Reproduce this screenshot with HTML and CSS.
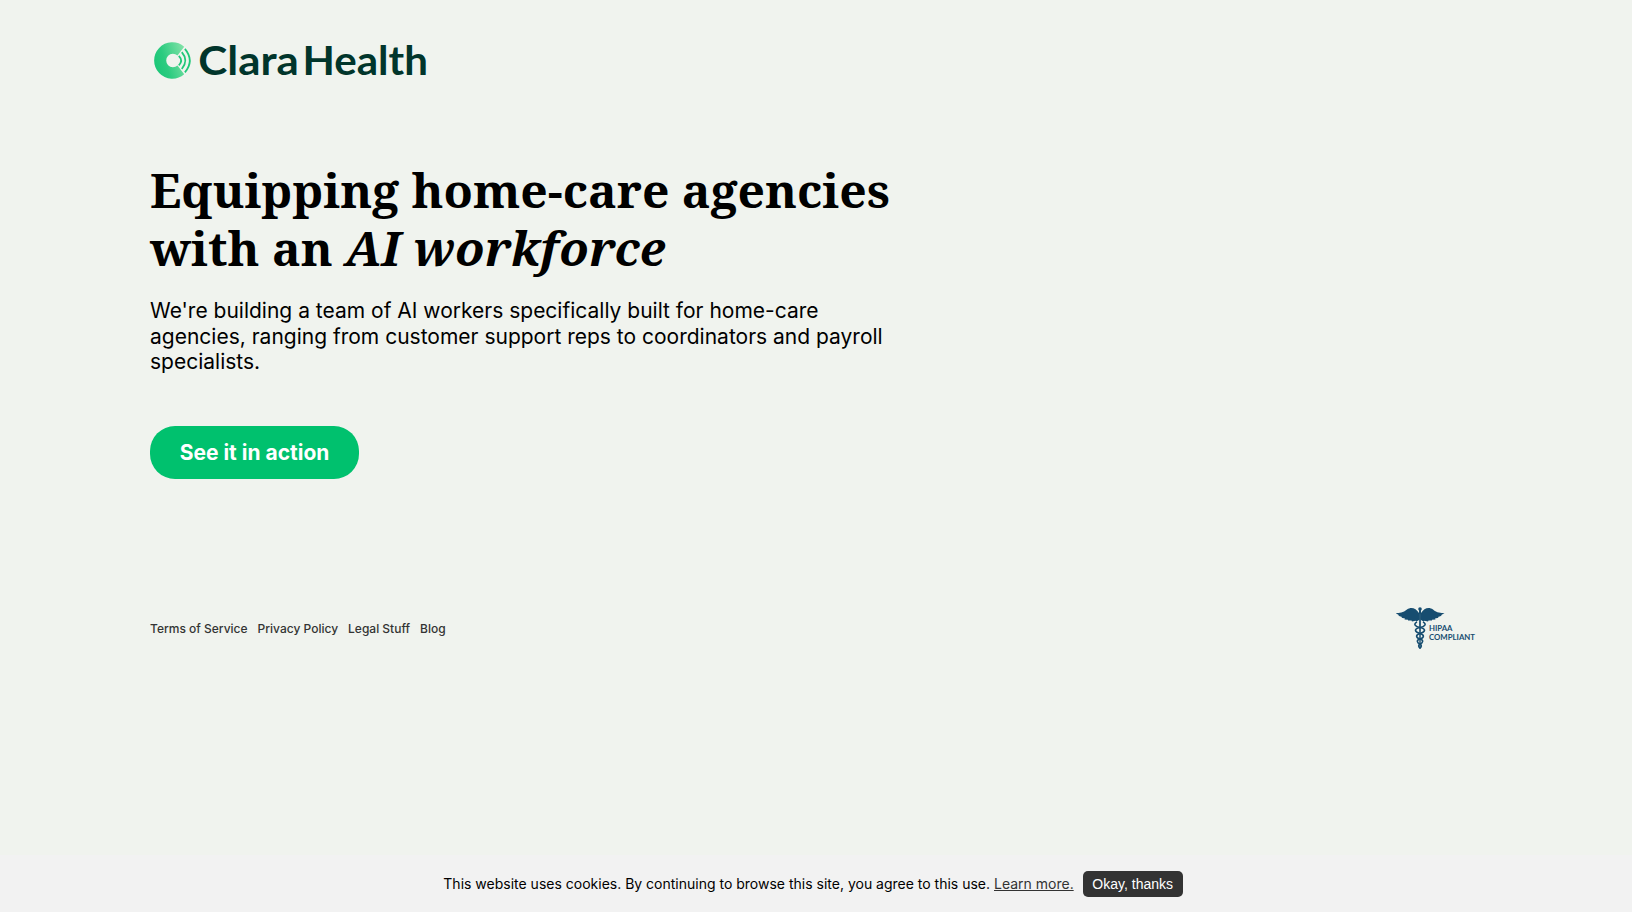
FILE: index.html
```
<!DOCTYPE html>
<html lang="en">
<head>
<meta charset="utf-8">
<title>Clara Health</title>
<link rel="stylesheet" href="styles.css">
</head>
<body>
<div class="page">
  <header class="header">
    <svg class="logo" viewBox="0 -10 280 62" role="img" aria-label="Clara Health">
      <defs>
        <linearGradient id="mark" x1="1" y1=".1" x2="0" y2=".5">
          <stop offset="0" stop-color="#83e3a9"/>
          <stop offset=".7" stop-color="#2bcb7f"/>
          <stop offset="1" stop-color="#1dc778"/>
        </linearGradient>
      </defs>
      <path fill="url(#mark)" d="M34.200 6.700A18.200 18.200 0 1 0 34.200 34.300L27.500 25.400A6.700 6.700 0 1 1 27.500 15.600Z"/>
      <g fill="none" stroke="#20c879" stroke-width="1.8">
        <path d="M28.800 15.800Q33.400 20.500 28.800 25.400"/>
        <path d="M31.800 12.200Q38.900 20.500 31.800 29"/>
        <path d="M34.900 8.800Q44.700 20.500 34.900 32.300"/>
      </g>
      <g class="wordmark">
        <text x="48.300" y="34.500" textLength="100.500" lengthAdjust="spacingAndGlyphs">Clara</text>
        <text x="152.500" y="34.500" textLength="125.500" lengthAdjust="spacingAndGlyphs">Health</text>
      </g>
    </svg>
  </header>
  <main class="hero">
    <h1 class="title">Equipping home-care agencies<br>with an <em>AI workforce</em></h1>
    <p class="lead">We're building a team of AI workers specifically built for home-care<br>agencies, ranging from customer support reps to coordinators and payroll<br>specialists.</p>
    <a class="cta">See it in action</a>
  </main>
  <footer class="footer">
    <nav class="links"><a>Terms of Service</a><a>Privacy Policy</a><a>Legal Stuff</a><a>Blog</a></nav>
    <svg class="hipaa" viewBox="0 0 82 46" role="img" aria-label="HIPAA compliant">
      <g fill="#174d70">
        <path d="M23 7C20 2 15 .500 11 3.500 7 7 3 7 -.500 7L3 9.200 2.300 9.800 6 11 5.500 11.700 9 12.600 8.500 13.400 12 13.800 12 14.600 15.500 14.500 16 15.400 19.500 14.800 20.500 15.600 23 14Z"/>
        <path d="M25 7C28 2 33 .500 37 3.500 41 7 45 7 48.500 7L45 9.200 45.700 9.800 42 11 42.500 11.700 39 12.600 39.500 13.400 36 13.800 36 14.600 32.500 14.500 32 15.400 28.500 14.800 27.500 15.600 25 14Z"/>
        <circle cx="24" cy="3" r="1.800"/>
        <path d="M23 4H25L24.600 43H23.400Z"/>
      </g>
      <g fill="none" stroke="#174d70" stroke-width="1.6">
        <path d="M21 16C17 18 19 20.500 24 21.500 31 23 29 26 24 27.500 19 29 20 32 24 33 28 34 27 37 24 38 22 39 22.500 41 24 42"/>
        <path d="M27 16C31 18 29 20.500 24 21.500 17 23 19 26 24 27.500 29 29 28 32 24 33 20 34 21 37 24 38 26 39 25.500 41 24 42"/>
      </g>
      <g class="hipaa-text">
        <text x="33" y="25.300" textLength="23.500" lengthAdjust="spacingAndGlyphs">HIPAA</text>
        <text x="33" y="34" textLength="46" lengthAdjust="spacingAndGlyphs">COMPLIANT</text>
      </g>
    </svg>
  </footer>
</div>
<div class="cookie-bar">
  <p class="cookie-text">This website uses cookies. By continuing to browse this site, you agree to this use. <a class="learn">Learn more.</a></p>
  <button class="accept">Okay, thanks</button>
</div>
</body>
</html>
```
FILE: styles.css
```
* { box-sizing: border-box; }
body {
  margin: 0;
  height: 912px;
  display: flex;
  flex-direction: column;
  justify-content: space-between;
  overflow: hidden;
  background: #f0f3ee;
  color: #000;
  font-family: Inter, sans-serif;
}
.page { padding: 30px 150px 0; }
.header { height: 131px; }
.logo { display: block; width: 280px; height: 62px; }
.wordmark {
  fill: #01352b;
  font-family: Lato, sans-serif;
  font-size: 39.500px;
  font-weight: 700;
}
.hero { display: flex; flex-direction: column; align-items: flex-start; }
.title {
  margin: 0;
  font: 700 48px/58px "Noto Serif", "Droid Serif", "DejaVu Serif", serif;
  white-space: nowrap;
}
.lead {
  margin: 21px 0 0;
  font-size: 21px;
  line-height: 25.500px;
  white-space: nowrap;
}
.cta {
  display: flex;
  align-items: center;
  justify-content: center;
  width: 209px;
  height: 53px;
  margin-top: 51px;
  border-radius: 25px;
  background: #00c16e;
  color: #fff;
  font-size: 21px;
  font-weight: 700;
}
.footer {
  display: flex;
  justify-content: space-between;
  margin-top: 127px;
  padding-right: 4px;
}
.links {
  display: flex;
  gap: 10px;
  padding-top: 15px;
  color: #333;
  font-size: 12px;
  font-weight: 500;
  line-height: 16px;
}
.hipaa { width: 82px; height: 46px; }
.hipaa-text { fill: #174d70; font: 700 7px Lato, sans-serif; }
.cookie-bar {
  display: flex;
  justify-content: center;
  align-items: center;
  gap: 9px;
  height: 57px;
  padding-right: 6px;
  background: #f2f2f2;
}
.cookie-text { margin: 0; font-size: 14px; }
.learn { color: #333; text-decoration: underline; }
.accept {
  width: 100px;
  height: 26px;
  padding: 0;
  border: 0;
  border-radius: 5px;
  background: #333;
  color: #fff;
  font: 14px "Liberation Sans", Arial, sans-serif;
}
```
